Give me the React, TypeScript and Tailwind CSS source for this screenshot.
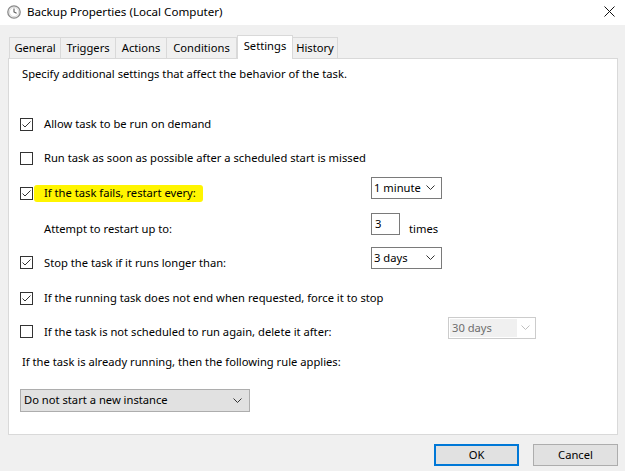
import React from "react";

const font = { fontFamily: '"Noto Sans", "Open Sans", sans-serif' };

function Check({ checked }: { checked: boolean }) {
  return (
    <div className="w-[13px] h-[13px] border border-[#333333] bg-white flex items-center justify-center shrink-0">
      {checked && (
        <svg width="11" height="11" viewBox="0 0 11 11">
          <polyline points="1.5,5.5 4,8 9.5,2.5" fill="none" stroke="#333333" strokeWidth="1" />
        </svg>
      )}
    </div>
  );
}

function Chevron({ color = "#333333" }: { color?: string }) {
  return (
    <svg width="9" height="6" viewBox="0 0 9 6" className="shrink-0">
      <polyline points="0.5,0.5 4.5,4.5 8.5,0.5" fill="none" stroke={color} strokeWidth="1" />
    </svg>
  );
}

function Select({ value, className = "" }: { value: string; className?: string }) {
  return (
    <div className={`h-[22px] w-[71px] border border-[#7a7a7a] bg-white flex items-center pl-[2px] pr-[6px] justify-between ${className}`}>
      <span>{value}</span>
      <Chevron />
    </div>
  );
}

function Row({ children, className = "" }: { children: React.ReactNode; className?: string }) {
  return <div className={`h-[20px] flex items-center ${className}`}>{children}</div>;
}

function ClockIcon() {
  return (
    <svg width="14" height="14" viewBox="0 0 14 14">
      <circle cx="7" cy="7" r="6.2" fill="#f3f3f3" stroke="#8a8a8a" strokeWidth="1.3" />
      <circle cx="7" cy="7" r="4.6" fill="#ffffff" stroke="#c8c8c8" strokeWidth="0.6" />
      <polyline points="7,3.6 7,7 9.6,8.2" fill="none" stroke="#5a5a5a" strokeWidth="1.1" />
    </svg>
  );
}

export default function App() {
  const tabs = [
    { label: "General", w: 51 },
    { label: "Triggers", w: 55 },
    { label: "Actions", w: 51 },
    { label: "Conditions", w: 70 },
    { label: "Settings", w: 56, sel: true },
    { label: "History", w: 45 },
  ];
  return (
    <div className="w-[625px] h-[471px] bg-[#f0f0f0] text-[11.2px] text-black flex flex-col overflow-hidden" style={font}>
      {/* Title bar */}
      <div className="h-[25px] bg-white flex items-center pl-[7px] pr-[8px] pb-[2px] shrink-0 text-[11.6px]">
        <ClockIcon />
        <span className="ml-[6px]">Backup Properties (Local Computer)</span>
        <div className="ml-auto mr-[2px]">
          <svg width="11" height="11" viewBox="0 0 11 11">
            <line x1="0.5" y1="0.5" x2="10.5" y2="10.5" stroke="#111" strokeWidth="1" />
            <line x1="10.5" y1="0.5" x2="0.5" y2="10.5" stroke="#111" strokeWidth="1" />
          </svg>
        </div>
      </div>

      {/* Tabs */}
      <div className="h-[33px] flex items-end pl-[9px] shrink-0 relative z-10">
        {tabs.map((t) =>
          t.sel ? (
            <div
              key={t.label}
              className="h-[24px] -mb-px bg-white border border-b-0 border-[#d9d9d9] flex items-center justify-center pb-[2px]"
              style={{ width: t.w }}
            >
              {t.label}
            </div>
          ) : (
            <div
              key={t.label}
              className="h-[21px] bg-[#f0f0f0] border border-b-0 border-[#d9d9d9] -ml-px first:ml-0 flex items-center justify-center pt-[1px]"
              style={{ width: t.w + 1 }}
            >
              {t.label}
            </div>
          )
        )}
      </div>

      {/* Panel */}
      <div className="ml-[8px] w-[610px] h-[377px] bg-white border border-[#d9d9d9] shrink-0 flex flex-col pl-[11px] pt-[5px]">
        <Row className="pl-[2px]">Specify additional settings that affect the behavior of the task.</Row>

        <Row className="mt-[30px]">
          <Check checked />
          <span className="ml-[11px]">Allow task to be run on demand</span>
        </Row>

        <Row className="mt-[14px]">
          <Check checked={false} />
          <span className="ml-[11px]">Run task as soon as possible after a scheduled start is missed</span>
        </Row>

        <Row className="mt-[15px]">
          <div className="w-[351px] flex items-center shrink-0">
            <Check checked />
            <span className="ml-[1px] pl-[10px] pr-[7px] h-[17px] flex items-center bg-[#fff500] rounded-[3px]">
              If the task fails, restart every:
            </span>
          </div>
          <Select value="1 minute" className="mb-[10px]" />
        </Row>

        <Row className="mt-[16px]">
          <div className="w-[351px] pl-[24px] shrink-0">Attempt to restart up to:</div>
          <div className="h-[22px] w-[29px] border border-[#7a7a7a] bg-white pl-[3px] flex items-center mb-[10px]">3</div>
          <span className="ml-[9px]">times</span>
        </Row>

        <Row className="mt-[14px]">
          <div className="w-[351px] flex items-center shrink-0">
            <Check checked />
            <span className="ml-[11px]">Stop the task if it runs longer than:</span>
          </div>
          <Select value="3 days" className="mb-[10px]" />
        </Row>

        <Row className="mt-[15px]">
          <Check checked />
          <span className="ml-[11px]">If the running task does not end when requested, force it to stop</span>
        </Row>

        <Row className="mt-[14px]">
          <div className="w-[428px] flex items-center shrink-0">
            <Check checked={false} />
            <span className="ml-[11px]">If the task is not scheduled to run again, delete it after:</span>
          </div>
          <div className="h-[22px] w-[88px] border border-[#cccccc] bg-white flex items-center mb-[8px] p-[1px]">
            <div className="h-full w-[67px] bg-[#f0f0f0] text-[#6d6d6d] flex items-center pl-[2px]">30 days</div>
            <div className="flex-1 flex items-center justify-center">
              <Chevron color="#bfbfbf" />
            </div>
          </div>
        </Row>

        <Row className="mt-[10px] pl-[2px]">If the task is already running, then the following rule applies:</Row>

        <div className="mt-[17px] h-[23px] w-[230px] bg-[#e1e1e1] border border-[#adadad] flex items-center justify-between pl-[3px] pr-[7px]">
          <span>Do not start a new instance</span>
          <Chevron />
        </div>
      </div>

      {/* Buttons */}
      <div className="flex justify-end gap-[14px] pr-[7px] mt-[9px]">
        <div className="h-[22px] w-[85px] bg-[#e1e1e1] border-2 border-[#0078d7] flex items-center justify-center">OK</div>
        <div className="h-[22px] w-[85px] bg-[#e1e1e1] border border-[#adadad] flex items-center justify-center">Cancel</div>
      </div>
    </div>
  );
}
